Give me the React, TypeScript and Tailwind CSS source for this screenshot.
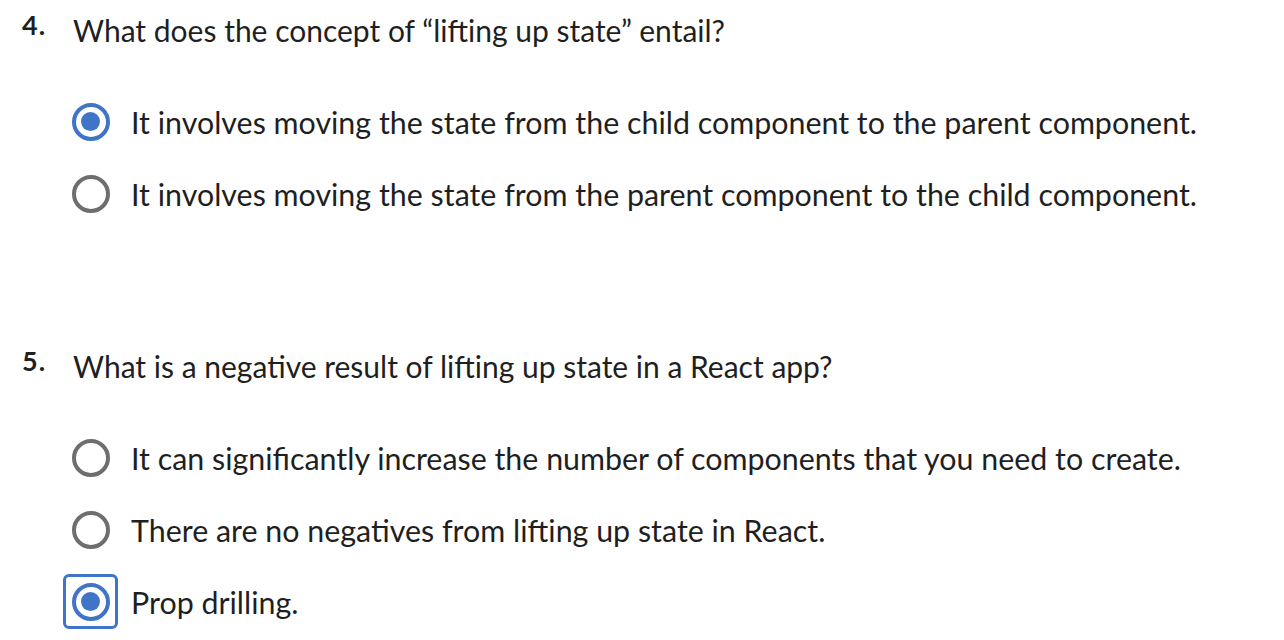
import React from "react";

type Question = {
  num: number;
  text: string;
  options: string[];
  selected: number;
};

const questions: Question[] = [
  {
    num: 4,
    text: "What does the concept of \u201clifting up state\u201d entail?",
    options: [
      "It involves moving the state from the child component to the parent component.",
      "It involves moving the state from the parent component to the child component.",
    ],
    selected: 0,
  },
  {
    num: 5,
    text: "What is a negative result of lifting up state in a React app?",
    options: [
      "It can significantly increase the number of components that you need to create.",
      "There are no negatives from lifting up state in React.",
      "Prop drilling.",
    ],
    selected: 2,
  },
];

function Radio({ checked, focused }: { checked: boolean; focused?: boolean }) {
  return (
    <div
      className={
        "flex h-[55px] w-[55px] shrink-0 items-center justify-center rounded-[6px] border-[3px] " +
        (focused ? "border-[#3f74c8]" : "border-transparent")
      }
    >
      {checked ? (
        <div className="flex h-[38px] w-[38px] items-center justify-center rounded-full border-[4px] border-[#3f74c8]">
          <div className="h-[19px] w-[19px] rounded-full bg-[#3f74c8]" />
        </div>
      ) : (
        <div className="h-[38px] w-[38px] rounded-full border-[4px] border-[#6e6e6e]" />
      )}
    </div>
  );
}

export default function App() {
  return (
    <div
      className="min-h-[640px] w-[1284px] bg-white text-[#1f1f1f]"
      style={{ fontFamily: "Lato, 'Open Sans', sans-serif" }}
    >
      <div className="flex flex-col pt-[8px]">
        {questions.map((q, qi) => (
          <div key={q.num} className={qi > 0 ? "mt-[123px]" : ""}>
            <div className="flex items-start">
              <span className="w-[73px] pl-[22px] pt-[2px] text-[27px] font-bold leading-[30px] tracking-[1px]">
                {q.num}.
              </span>
              <span className="text-[30px] leading-[44px]">{q.text}</span>
            </div>
            <div className="mt-[42px] flex flex-col gap-[17px] pl-[63px]">
              {q.options.map((opt, oi) => (
                <label key={oi} className="flex items-center gap-[13px]">
                  <Radio
                    checked={oi === q.selected}
                    focused={qi === 1 && oi === q.selected}
                  />
                  <span className="text-[30.4px] leading-[40px]">{opt}</span>
                </label>
              ))}
            </div>
          </div>
        ))}
      </div>
    </div>
  );
}
